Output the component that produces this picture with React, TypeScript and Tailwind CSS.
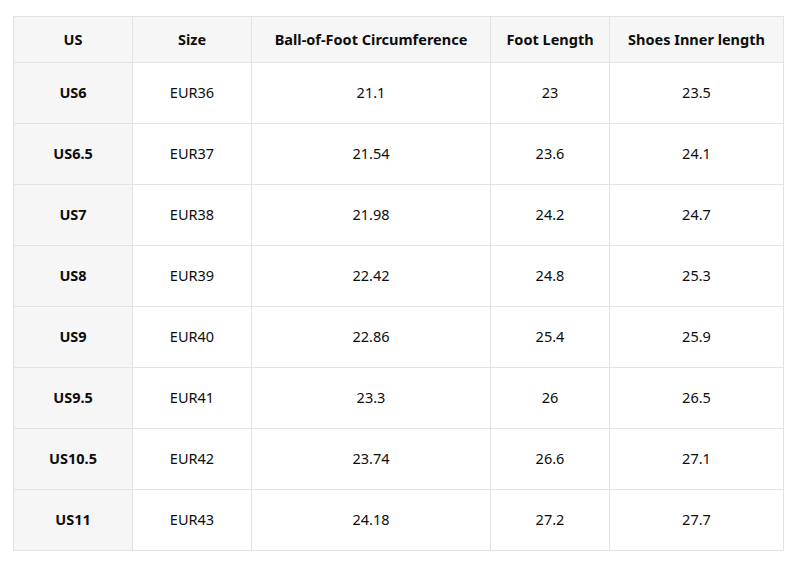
import React from "react";

const rows = [
  ["US6", "EUR36", "21.1", "23", "23.5"],
  ["US6.5", "EUR37", "21.54", "23.6", "24.1"],
  ["US7", "EUR38", "21.98", "24.2", "24.7"],
  ["US8", "EUR39", "22.42", "24.8", "25.3"],
  ["US9", "EUR40", "22.86", "25.4", "25.9"],
  ["US9.5", "EUR41", "23.3", "26", "26.5"],
  ["US10.5", "EUR42", "23.74", "26.6", "27.1"],
  ["US11", "EUR43", "24.18", "27.2", "27.7"],
];

const headers = ["US", "Size", "Ball-of-Foot Circumference", "Foot Length", "Shoes Inner length"];

export default function App() {
  return (
    <div className="w-[804px] h-[569px] bg-white pt-4 pl-[13px] font-['Noto_Sans','Open_Sans',sans-serif] text-[#0d0d0d]">
      <table className="border-collapse table-fixed w-[770px] text-[14.5px]">
        <colgroup>
          <col className="w-[119px]" />
          <col className="w-[119px]" />
          <col className="w-[239px]" />
          <col className="w-[119px]" />
          <col className="w-[174px]" />
        </colgroup>
        <thead>
          <tr className="h-[46px] bg-[#f6f6f6]">
            {headers.map((h) => (
              <th key={h} className="border border-[#e3e3e3] font-bold text-center">
                {h}
              </th>
            ))}
          </tr>
        </thead>
        <tbody>
          {rows.map((r) => (
            <tr key={r[0]} className="h-[61px]">
              {r.map((c, i) => (
                <td
                  key={i}
                  className={
                    i === 0
                      ? "border border-[#e3e3e3] bg-[#f6f6f6] font-bold text-center"
                      : "border border-[#e3e3e3] text-center"
                  }
                >
                  {c}
                </td>
              ))}
            </tr>
          ))}
        </tbody>
      </table>
    </div>
  );
}
